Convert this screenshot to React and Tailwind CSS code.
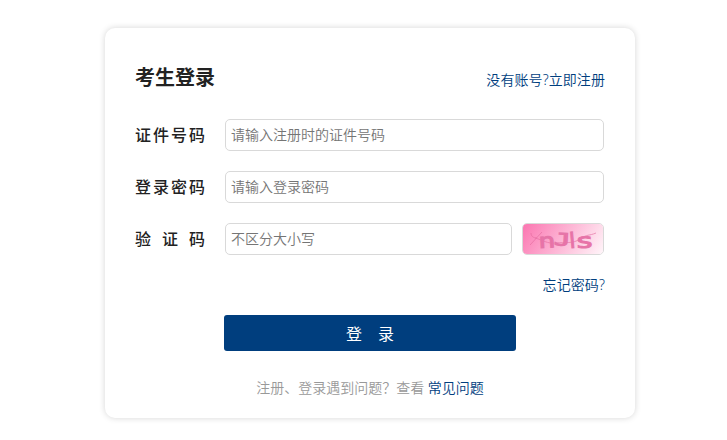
import React, { useState } from 'react';

const Field = ({ label, name, value, onChange, placeholder, type = 'text', children }) => (
  <div className="flex h-8 items-center">
    <label htmlFor={name} className="flex w-[70px] mr-5 shrink-0 justify-between text-base leading-8 font-medium text-[#222]">
      {label.split('').map((char) => (
        <span key={char}>{char}</span>
      ))}
    </label>
    <input
      id={name}
      type={type}
      name={name}
      value={value}
      onChange={onChange}
      placeholder={placeholder}
      className="h-8 min-w-0 flex-1 rounded-[5px] border border-[#d9d9d9] bg-white px-[5px] pb-0.5 text-sm font-[350] text-[#333] placeholder:text-[#757575] focus:outline-none focus:border-[#003e7e]"
    />
    {children}
  </div>
);

const Captcha = () => (
  <svg viewBox="0 0 80 30" className="h-[30px] w-20" fontFamily="DejaVu Sans, sans-serif">
    <defs>
      <linearGradient id="captchaBg" gradientUnits="userSpaceOnUse" x1="6" y1="-8" x2="74" y2="38">
        <stop offset="0" stopColor="#fb76b1" />
        <stop offset="1" stopColor="#fff5f9" />
      </linearGradient>
    </defs>
    <rect width="80" height="30" fill="url(#captchaBg)" />
    {/* Noise lines */}
    <g fill="none" stroke="#e56ca0" strokeWidth="0.8" opacity="0.8">
      <path d="M8 9 C8 12 10 14 14 14" />
      <path d="M7 21 L19 8" />
      <path d="M12 14 C20 16 24 20 33 19 S50 20 57 15 S66 12 73 9" />
    </g>
    <g fill="#ef6fa9" stroke="#e576a8" strokeWidth="1.1">
      <text transform="translate(16 24) rotate(-3) scale(1.3 1)" fontSize="20">n</text>
      <text transform="translate(31 21) rotate(3) scale(1.6 1)" fontSize="17" fontFamily="DejaVu Sans Mono, monospace">J</text>
      <text transform="translate(47 24) rotate(-5)" fontSize="21">l</text>
      <text transform="translate(54 24) rotate(-2) scale(1.5 1)" fontSize="20">s</text>
    </g>
  </svg>
);

const App = () => {
  const [form, setForm] = useState({ cardNo: '', password: '', code: '' });

  const handleChange = (e) => {
    setForm({ ...form, [e.target.name]: e.target.value });
  };

  const handleSubmit = (e) => {
    e.preventDefault();
  };

  return (
    <div className="flex h-[440px] w-[727px] justify-center bg-white pt-7 pl-[13px] font-['Noto_Sans','Noto_Sans_CJK_SC',sans-serif]">
      <div className="h-[390px] w-[530px] rounded-[10px] bg-white px-[30px] shadow-[0_0_6px_rgba(0,0,0,0.17)]">
        <div className="flex items-end justify-between pt-[35px]">
          <h2 className="text-xl leading-[30px] font-bold text-[#222]">考生登录</h2>
          <a href="#" className="mb-px text-sm leading-6 font-[350] tracking-[0.08px] text-[#003e7e]">没有账号?立即注册</a>
        </div>

        <form onSubmit={handleSubmit}>
          <div className="mt-[26px] mr-px space-y-5">
            <Field label="证件号码" name="cardNo" value={form.cardNo} onChange={handleChange} placeholder="请输入注册时的证件号码" />
            <Field label="登录密码" name="password" type="password" value={form.password} onChange={handleChange} placeholder="请输入登录密码" />
            <Field label="验证码" name="code" value={form.code} onChange={handleChange} placeholder="不区分大小写">
              <button type="button" aria-label="刷新验证码" className="ml-2.5 h-8 w-[82px] shrink-0 overflow-hidden rounded-[5px] border border-[#d9d9d9]">
                <Captcha />
              </button>
            </Field>
          </div>

          <div className="mt-5 text-right text-sm leading-5 font-[350]">
            <a href="#" className="tracking-[0.1px] text-[#003e7e]">忘记密码?</a>
          </div>

          <button type="submit" className="mt-5 ml-[89px] flex h-9 w-[292px] items-center justify-center gap-4 rounded-[3px] bg-[#003e7e] pt-0.5 text-base text-white">
            <span>登</span>
            <span>录</span>
          </button>
        </form>

        <p className="mt-[27px] text-center text-sm leading-5 font-[350] text-[#999]">
          注册、登录遇到问题？查看 <a href="#" className="text-[#003e7e]">常见问题</a>
        </p>
      </div>
    </div>
  );
};

export default App;
